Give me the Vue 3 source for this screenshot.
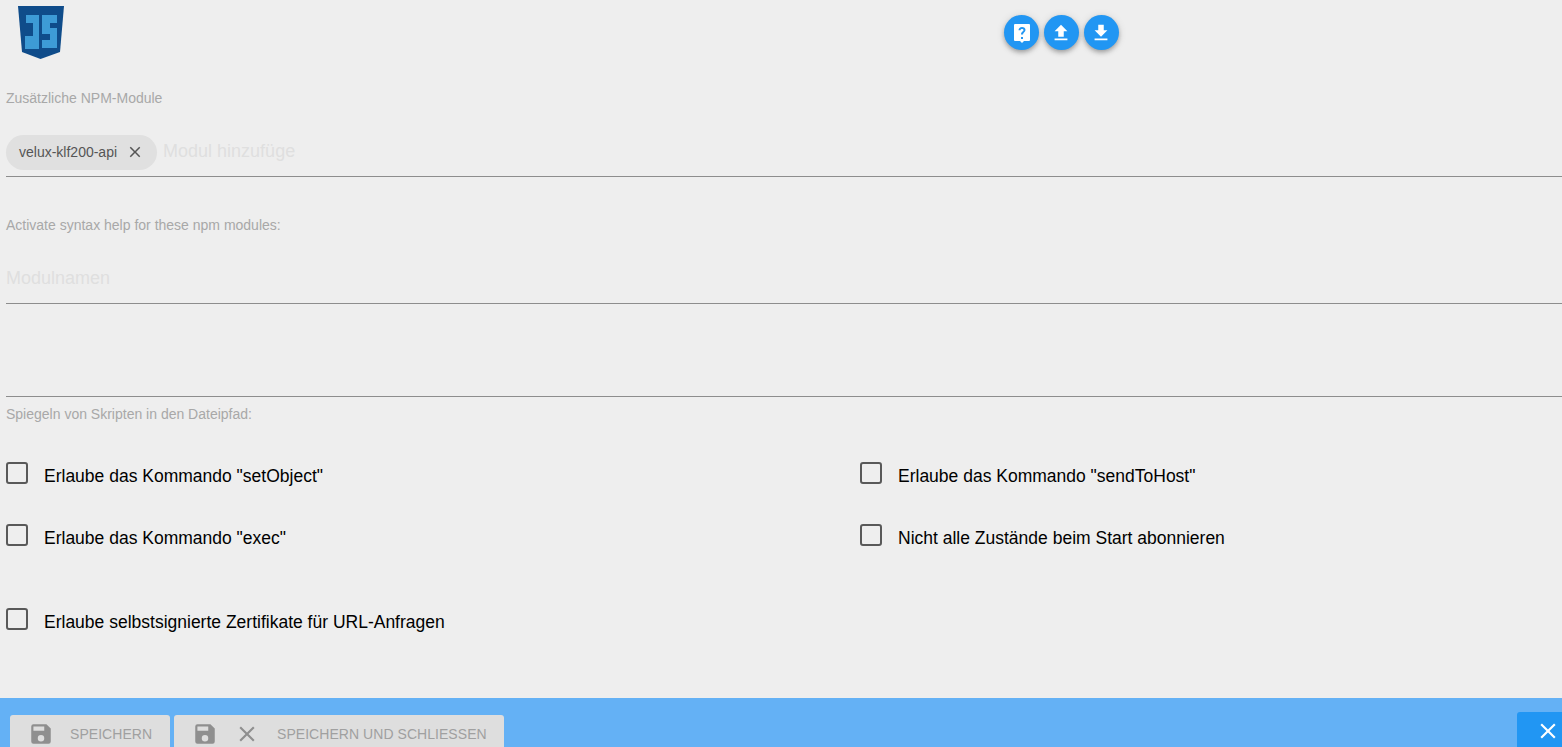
<script setup>
const checks = [
  { text: 'Erlaube das Kommando "setObject"' },
  { text: 'Erlaube das Kommando "sendToHost"' },
  { text: 'Erlaube das Kommando "exec"' },
  { text: 'Nicht alle Zustände beim Start abonnieren' },
  { text: 'Erlaube selbstsignierte Zertifikate für URL-Anfragen', wide: true }
]
const save = 'M17 3H5a2 2 0 0 0-2 2v14a2 2 0 0 0 2 2h14a2 2 0 0 0 2-2V7l-4-4zm-5 16a3 3 0 1 1 0-6 3 3 0 0 1 0 6zm3-10H5V5h10v4z'
const close = 'M19 6.41 17.59 5 12 10.59 6.41 5 5 6.41 10.59 12 5 17.59 6.41 19 12 13.41 17.59 19 19 17.59 13.41 12z'
</script>

<template>
  <div class="page">
    <main class="content">
      <header class="top">
        <svg class="logo" viewBox="0 0 47 53" width="47" height="53">
          <path d="M1 0H47L43 46L23.500 53L5 46Z" fill="#0f4c8a" />
          <path d="M9 9H22V43H8V30H16V17H9Z M25 9H40V17H33V22H40V42H25V34H33V28H25Z" fill="#3d9bd6" />
        </svg>
        <div class="fabs">
          <button class="fab">
            <svg viewBox="0 0 24 24" width="24" height="24"><path fill="#fff" d="M5 3h14a1 1 0 0 1 1 1v15a1 1 0 0 1-1 1h-5l-2 2-2-2H5a1 1 0 0 1-1-1V4a1 1 0 0 1 1-1zm6 13v2h2v-2h-2zm1-10c-2 0-3.500 1.300-3.500 3.300h2c0-.9.600-1.400 1.500-1.400s1.500.5 1.500 1.200c0 1.500-2.500 1.500-2.500 4.400h2c0-2 2.500-2.300 2.500-4.500C15.500 7.300 14 6 12 6z" /></svg>
          </button>
          <button class="fab arrow">
            <svg viewBox="0 0 24 24" width="22" height="22"><path fill="#fff" d="M9 16h6v-6h4l-7-7-7 7h4v6zm-4 2h14v2H5v-2z" /></svg>
          </button>
          <button class="fab arrow">
            <svg viewBox="0 0 24 24" width="22" height="22"><path fill="#fff" d="M19 9h-4V3H9v6H5l7 7 7-7zM5 18v2h14v-2H5z" /></svg>
          </button>
        </div>
      </header>

      <section class="field first">
        <div class="label">Zusätzliche NPM-Module</div>
        <div class="input chips">
          <span class="chip">
            velux-klf200-api
            <svg viewBox="0 0 24 24" width="18" height="18"><path fill="#555" :d="close" /></svg>
          </span>
          <span class="placeholder">Modul hinzufüge</span>
        </div>
      </section>

      <section class="field second">
        <div class="label">Activate syntax help for these npm modules:</div>
        <div class="input">
          <span class="placeholder">Modulnamen</span>
        </div>
      </section>

      <section class="field third">
        <div class="input empty"></div>
        <div class="label">Spiegeln von Skripten in den Dateipfad:</div>
      </section>

      <section class="checks">
        <label v-for="c in checks" :key="c.text" class="check" :class="{ wide: c.wide }">
          <span class="box"></span>
          <span class="text">{{ c.text }}</span>
        </label>
      </section>
    </main>

    <footer class="bar">
      <button class="btn one">
        <svg viewBox="0 0 24 24" width="26" height="26"><path fill="#8f8f8f" :d="save" /></svg>
        <span>SPEICHERN</span>
      </button>
      <button class="btn two">
        <svg viewBox="0 0 24 24" width="26" height="26"><path fill="#8f8f8f" :d="save" /></svg>
        <svg viewBox="0 0 24 24" width="26" height="26"><path fill="#8f8f8f" :d="close" /></svg>
        <span>SPEICHERN UND SCHLIESSEN</span>
      </button>
      <button class="dismiss">
        <svg viewBox="0 0 24 24" width="26" height="26"><path fill="#fff" :d="close" /></svg>
      </button>
    </footer>
  </div>
</template>

<style scoped>
.page {
  height: 747px;
  width: 1562px;
  overflow: hidden;
  display: flex;
  flex-direction: column;
  background: #eeeeee;
  font-family: "Liberation Sans", Arial, sans-serif;
}
.content {
  flex: 1;
  min-height: 0;
  padding-left: 6px;
  box-sizing: border-box;
}
.top {
  height: 65px;
  display: flex;
  padding-top: 6px;
  box-sizing: border-box;
  padding-left: 11px;
}
.logo {
  display: block;
}
.fabs {
  display: flex;
  gap: 5px;
  margin-left: 940px;
  padding-top: 9px;
}
.fab {
  width: 35px;
  height: 35px;
  border: 0;
  padding: 0;
  border-radius: 50%;
  background: #2196f3;
  display: flex;
  align-items: center;
  justify-content: center;
  box-shadow: 0 2px 4px -1px rgba(0, 0, 0, .2), 0 3px 5px 0 rgba(0, 0, 0, .14), 0 1px 8px 0 rgba(0, 0, 0, .12);
}
.fab.arrow {
  padding-right: 1px;
}
.field {
  display: flex;
  flex-direction: column;
}
.first {
  padding-top: 25px;
}
.second {
  padding-top: 40px;
}
.label {
  font-size: 14px;
  line-height: 16px;
  color: #a8a8a8;
}
.input {
  border-bottom: 1px solid #8d8d8d;
  display: flex;
  align-items: center;
  box-sizing: border-box;
}
.first .input,
.second .input {
  height: 71px;
  padding-top: 28px;
  padding-bottom: 6px;
}
.third .input {
  height: 93px;
  margin-bottom: 9px;
}
.chip {
  height: 35px;
  border-radius: 18px;
  background: #e0e0e0;
  color: #555;
  font-size: 14px;
  display: flex;
  align-items: center;
  gap: 9px;
  padding: 0 13px;
  box-sizing: border-box;
  margin-right: 6px;
}
.placeholder {
  font-size: 18px;
  color: #dfdfdf;
  padding-bottom: 2px;
}
.checks {
  display: grid;
  grid-template-columns: 854px 1fr;
  grid-auto-rows: 62px;
  padding-top: 40px;
}
.check {
  display: flex;
  align-items: flex-start;
  gap: 16px;
  color: #000;
  font-size: 17.5px;
}
.check.wide {
  margin-top: 22px;
  grid-column: 1 / 3;
}
.box {
  width: 22px;
  height: 22px;
  box-sizing: border-box;
  border: 2px solid #595959;
  border-radius: 3px;
}
.text {
  line-height: 20px;
  margin-top: 4px;
  white-space: nowrap;
}
.bar {
  height: 49px;
  flex: none;
  background: #64b1f5;
  position: relative;
  display: flex;
  gap: 4px;
  padding: 17px 0 0 10px;
  box-sizing: border-box;
}
.btn {
  height: 50px;
  border: 0;
  border-radius: 3px 3px 0 0;
  background: #dedede;
  color: #a0a0a0;
  font-family: inherit;
  font-size: 14px;
  letter-spacing: .05px;
  display: flex;
  align-items: flex-start;
  padding: 6px 0 0 18px;
  box-sizing: border-box;
}
.btn span {
  line-height: 24px;
  margin-top: 1px;
  white-space: nowrap;
}
.one {
  width: 160px;
  gap: 16px;
}
.two {
  width: 330px;
  gap: 16px;
}
.two span {
  margin-left: 1px;
}
.dismiss {
  position: absolute;
  right: 0;
  top: 14px;
  width: 45px;
  height: 50px;
  border: 0;
  background: #2196f3;
  border-radius: 3px 0 0 0;
  padding: 6px 0 0 18px;
  box-sizing: border-box;
  display: flex;
  align-items: flex-start;
}
</style>
